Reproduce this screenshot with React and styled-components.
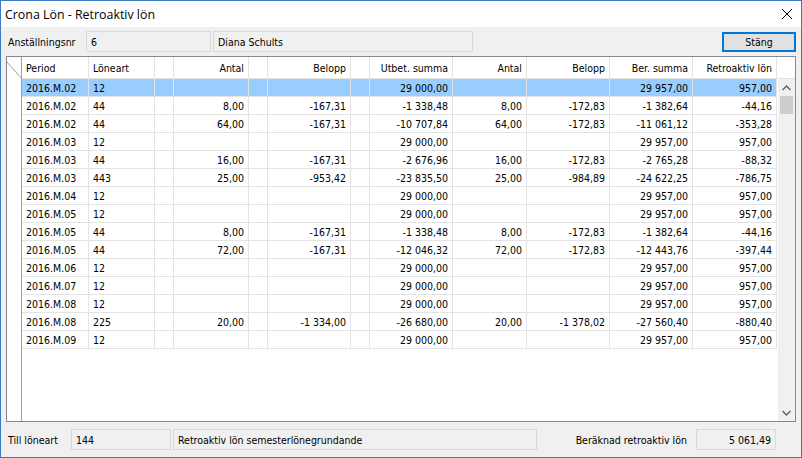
import React from 'react'
import styled, { createGlobalStyle } from 'styled-components'

const GlobalStyle = createGlobalStyle`
  html, body {
    margin: 0;
    padding: 0;
    background: #ffffff;
  }
  body {
    font-family: "DejaVu Sans Condensed", "DejaVu Sans", sans-serif;
    font-size: 10.5px;
    color: #000;
  }
`

const WIDTHS = [67, 66, 19, 75, 19, 83, 19, 83, 74, 83, 83, 84]
const COLS = WIDTHS.map(w => w + 'px').join(' ')

const HEADERS = [
  { t: 'Period', left: true },
  { t: 'Löneart', left: true },
  { t: '' },
  { t: 'Antal' },
  { t: '' },
  { t: 'Belopp' },
  { t: '' },
  { t: 'Utbet. summa' },
  { t: 'Antal' },
  { t: 'Belopp' },
  { t: 'Ber. summa' },
  { t: 'Retroaktiv lön' },
]

const base = (p, l) => [p, l, '', '', '', '', '', '29 000,00', '', '', '29 957,00', '957,00']

const ROWS = [
  base('2016.M.02', '12'),
  ['2016.M.02', '44', '', '8,00', '', '-167,31', '', '-1 338,48', '8,00', '-172,83', '-1 382,64', '-44,16'],
  ['2016.M.02', '44', '', '64,00', '', '-167,31', '', '-10 707,84', '64,00', '-172,83', '-11 061,12', '-353,28'],
  base('2016.M.03', '12'),
  ['2016.M.03', '44', '', '16,00', '', '-167,31', '', '-2 676,96', '16,00', '-172,83', '-2 765,28', '-88,32'],
  ['2016.M.03', '443', '', '25,00', '', '-953,42', '', '-23 835,50', '25,00', '-984,89', '-24 622,25', '-786,75'],
  base('2016.M.04', '12'),
  base('2016.M.05', '12'),
  ['2016.M.05', '44', '', '8,00', '', '-167,31', '', '-1 338,48', '8,00', '-172,83', '-1 382,64', '-44,16'],
  ['2016.M.05', '44', '', '72,00', '', '-167,31', '', '-12 046,32', '72,00', '-172,83', '-12 443,76', '-397,44'],
  base('2016.M.06', '12'),
  base('2016.M.07', '12'),
  base('2016.M.08', '12'),
  ['2016.M.08', '225', '', '20,00', '', '-1 334,00', '', '-26 680,00', '20,00', '-1 378,02', '-27 560,40', '-880,40'],
  base('2016.M.09', '12'),
]

function App() {
  return (
    <>
      <GlobalStyle />
      <Window>
        <TitleBar>
          <Title>Crona Lön - Retroaktiv lön</Title>
          <CloseBtn>
            <svg width="12" height="12" viewBox="0 0 12 12">
              <path d="M1 1 L11 11 M11 1 L1 11" stroke="#000" strokeWidth="1" fill="none" />
            </svg>
          </CloseBtn>
        </TitleBar>

        <TopBar>
          <Label $w={76}>Anställningsnr</Label>
          <Field $w={125}>6</Field>
          <Field $w={260}>Diana Schults</Field>
          <Spacer />
          <Button>Stäng</Button>
        </TopBar>

        <Table>
          <HeadRow>
            <Corner>
              <svg width="15" height="22" viewBox="0 0 15 22">
                <line x1="0" y1="5" x2="15" y2="22" stroke="#a0a0a0" strokeWidth="1" />
              </svg>
            </Corner>
            <Cols>
              {HEADERS.map((h, i) => (
                <HeadCell key={i} $left={h.left}>{h.t}</HeadCell>
              ))}
            </Cols>
            <HeadFill />
          </HeadRow>
          <Body>
            <Gutter />
            <Rows>
              {ROWS.map((r, i) => (
                <Row key={i} $selected={i === 0}>
                  {r.map((c, j) => (
                    <Cell key={j} $left={j < 2}>{c}</Cell>
                  ))}
                </Row>
              ))}
            </Rows>
            <ScrollBar>
              <Arrow>
                <svg width="9" height="6" viewBox="0 0 9 6">
                  <path d="M0.5 5 L4.5 1 L8.5 5" stroke="#606060" strokeWidth="1.4" fill="none" />
                </svg>
              </Arrow>
              <Track>
                <Thumb />
              </Track>
              <Arrow>
                <svg width="9" height="6" viewBox="0 0 9 6">
                  <path d="M0.5 1 L4.5 5 L8.5 1" stroke="#606060" strokeWidth="1.4" fill="none" />
                </svg>
              </Arrow>
            </ScrollBar>
          </Body>
        </Table>

        <BottomBar>
          <Label $w={61}>Till löneart</Label>
          <Field $w={100}>144</Field>
          <Field $w={364}>Retroaktiv lön semesterlönegrundande</Field>
          <Spacer />
          <Label>Beräknad retroaktiv lön</Label>
          <Field $w={80} $right>5 061,49</Field>
        </BottomBar>
      </Window>
    </>
  )
}

export default App

const Window = styled.div`
  width: 802px;
  height: 458px;
  box-sizing: border-box;
  border: 1px solid #3a7bc6;
  background: #f0f0f0;
  display: flex;
  flex-direction: column;
  overflow: hidden;
`

const TitleBar = styled.div`
  height: 26px;
  flex: none;
  background: #ffffff;
  display: flex;
  align-items: center;
  justify-content: space-between;
  padding: 0 7px 0 4px;
`

const Title = styled.span`
  font-family: "Open Sans", "Noto Sans", sans-serif;
  font-size: 12.4px;
`

const CloseBtn = styled.div`
  width: 14px;
  height: 14px;
  display: flex;
  align-items: center;
  justify-content: center;
`

const TopBar = styled.div`
  height: 29px;
  flex: none;
  display: flex;
  align-items: center;
  gap: 2px;
  padding: 0 5px 0 7px;
`

const BottomBar = styled.div`
  flex: 1;
  display: flex;
  align-items: center;
  gap: 2px;
  padding: 0 25px 0 7px;
`

const Label = styled.span`
  width: ${p => (p.$w ? p.$w + 'px' : 'auto')};
  flex: none;
  white-space: nowrap;
  margin-right: ${p => (p.$w ? '0' : '7px')};
`

const Field = styled.div`
  width: ${p => p.$w}px;
  height: 21px;
  box-sizing: border-box;
  flex: none;
  border: 1px solid #dadada;
  background: #f0f0f0;
  display: flex;
  align-items: center;
  justify-content: ${p => (p.$right ? 'flex-end' : 'flex-start')};
  padding: 0 4px;
  white-space: nowrap;
`

const Spacer = styled.div`
  flex: 1;
`

const Button = styled.div`
  width: 74px;
  height: 20px;
  box-sizing: border-box;
  border: 1px solid #0078d7;
  box-shadow: inset 0 0 0 1px #0078d7;
  background: #e1e1e1;
  display: flex;
  align-items: center;
  justify-content: center;
`

const Table = styled.div`
  height: 366px;
  flex: none;
  margin: 0 5px;
  box-sizing: border-box;
  border: 1px solid #828790;
  background: #ffffff;
  display: flex;
  flex-direction: column;
`

const HeadRow = styled.div`
  height: 22px;
  flex: none;
  display: flex;
`

const Corner = styled.div`
  width: 15px;
  height: 22px;
  flex: none;
  box-sizing: border-box;
  border-right: 1px solid #a0a0a0;
  svg { display: block; }
`

const Cols = styled.div`
  display: grid;
  grid-template-columns: ${COLS};
`

const HeadCell = styled.div`
  box-sizing: border-box;
  border-right: 1px solid #e3e3e3;
  border-bottom: 1px solid #e3e3e3;
  display: flex;
  align-items: center;
  justify-content: ${p => (p.$left ? 'flex-start' : 'flex-end')};
  padding: 0 4px;
  white-space: nowrap;
  overflow: hidden;
`

const HeadFill = styled.div`
  flex: 1;
  border-bottom: 1px solid #e3e3e3;
`

const Body = styled.div`
  flex: 1;
  display: flex;
  min-height: 0;
`

const Gutter = styled.div`
  width: 15px;
  flex: none;
  box-sizing: border-box;
  border-right: 1px solid #a0a0a0;
`

const Rows = styled.div`
  display: flex;
  flex-direction: column;
`

const Row = styled.div`
  display: grid;
  grid-template-columns: ${COLS};
  height: 18px;
  background: ${p => (p.$selected ? '#99ccff' : '#ffffff')};
`

const Cell = styled.div`
  box-sizing: border-box;
  border-right: 1px solid #e3e3e3;
  border-bottom: 1px solid #e3e3e3;
  display: flex;
  align-items: center;
  justify-content: ${p => (p.$left ? 'flex-start' : 'flex-end')};
  padding: 0 4px;
  white-space: nowrap;
  overflow: hidden;
`

const ScrollBar = styled.div`
  width: 17px;
  flex: none;
  margin-left: auto;
  background: #f0f0f0;
  display: flex;
  flex-direction: column;
`

const Arrow = styled.div`
  height: 17px;
  flex: none;
  display: flex;
  align-items: center;
  justify-content: center;
`

const Track = styled.div`
  flex: 1;
  padding: 0 2px;
`

const Thumb = styled.div`
  height: 18px;
  background: #cdcdcd;
`
